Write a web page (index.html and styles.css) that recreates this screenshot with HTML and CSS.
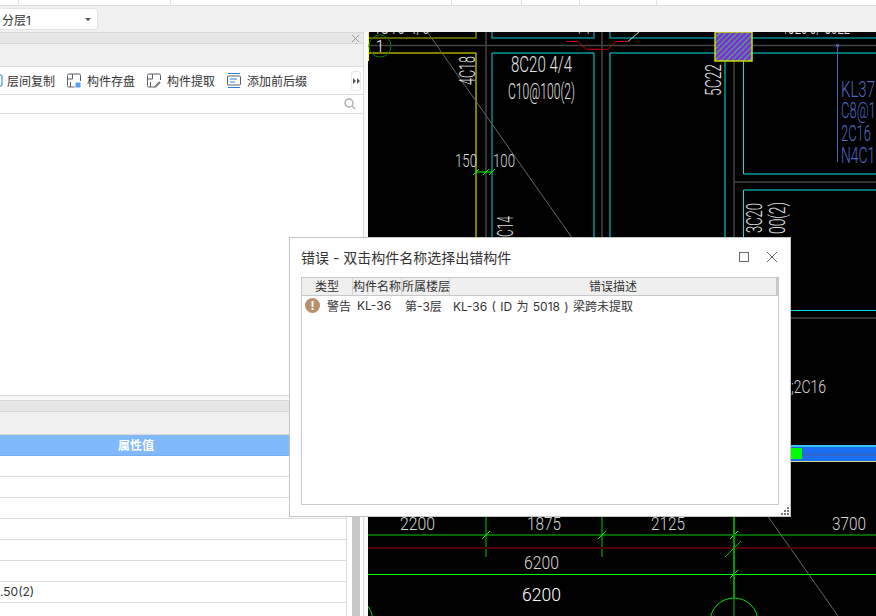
FILE: index.html
```html
<!DOCTYPE html>
<html lang="zh-CN">
<head>
    <meta charset="UTF-8">
    <title>错误 - 双击构件名称选择出错构件</title>
    <link rel="stylesheet" href="styles.css">
</head>
<body>

<div class="tabstrip">
    <span class="tab tab-a"></span><span class="tab tab-b"></span><span class="tab tab-c"></span><span class="tab tab-d"></span><span class="tab tab-e"></span><span class="tab tab-f"></span>
</div>
<div class="topbar">
    <div class="floor-select"><span>分层1</span><i class="caret"></i></div>
</div>

<div class="workspace">
    <div class="side">
        <div class="panel-head">
            <svg class="panel-close" width="9" height="9" viewBox="0 0 9 9"><path d="M1 1l7 7M8 1L1 8"/></svg>
        </div>
        <div class="band"></div>
        <div class="tools">
            <svg class="tool-icon tool-cut" width="3" height="14" viewBox="0 0 3 14"><path d="M-3 1h4a1 1 0 0 1 1 1v9a1 1 0 0 1-1 1h-4"/></svg>
            <span class="tool-label tool-first">层间复制</span>
            <svg class="tool-icon" width="14" height="15" viewBox="0 0 14 15"><path d="M8 14H2a1.500 1.500 0 0 1-1.500-1.500v-10A1.500 1.500 0 0 1 2 1h10a1.500 1.500 0 0 1 1.500 1.500V8M.5 6h5V1M3.500 14V9"/><rect class="fill-blue" x="8" y="9" width="6" height="6" rx="1"/></svg>
            <span class="tool-label">构件存盘</span>
            <svg class="tool-icon" width="14" height="15" viewBox="0 0 14 15"><path d="M8 14H2a1.500 1.500 0 0 1-1.500-1.500v-10A1.500 1.500 0 0 1 2 1h10a1.500 1.500 0 0 1 1.500 1.500V7M.5 6h5V1M3.500 14V9"/><path class="stroke-grey" d="M8 14l5-5"/></svg>
            <span class="tool-label">构件提取</span>
            <svg class="tool-icon" width="14" height="15" viewBox="0 0 14 15"><path class="stroke-blue" d="M1 .5h12M1 14.500h12"/><rect x=".5" y="3" width="13" height="9" rx="1"/><path class="stroke-blue" d="M3 6h7M3 9h5"/></svg>
            <span class="tool-label">添加前后缀</span>
            <div class="tools-more">
                <svg width="7" height="6" viewBox="0 0 7 6"><path d="M0 0l3 3-3 3zM4 0l3 3-3 3z"/></svg>
            </div>
        </div>
        <div class="search">
            <svg width="12" height="12" viewBox="0 0 12 12"><circle cx="5" cy="5" r="4"/><path d="M8 8l3 3"/></svg>
        </div>
        <div class="list"></div>

        <div class="props">
            <div class="panel-head"></div>
            <div class="band"></div>
            <div class="props-body">
                <div class="props-table">
                    <div class="props-title">属性值</div>
                    <div class="props-row"></div>
                    <div class="props-row"></div>
                    <div class="props-row"></div>
                    <div class="props-row"></div>
                    <div class="props-row"></div>
                    <div class="props-row"></div>
                    <div class="props-row">.50(2)</div>
                    <div class="props-row"></div>
                </div>
                <div class="scroll"><div class="scroll-thumb"></div></div>
            </div>
        </div>
    </div>

    <svg class="cad" width="508" height="584" viewBox="368 32 508 584">
        <defs>
            <pattern id="hatch" width="4" height="4" patternUnits="userSpaceOnUse" patternTransform="rotate(45)">
                <rect width="4" height="4" fill="#7a30e0"/>
                <rect width="1" height="4" fill="#48c040"/>
            </pattern>
        </defs>

        <!-- grid -->
        <path class="grey" d="M368 45.500H876M486 32V237M602 32V237M734 61V237M734 182H876M791 318H876"/>

        <!-- beams -->
        <path class="olive" d="M368 38H476V32"/>
        <path class="yellow" d="M368.500 32V61M368 53H476V237"/>
        <path class="teal" d="M492 32V38H594V32M610 32V38H876M492 53V237"/>
        <path class="cyan" d="M492 53H594V237M610 237V53H725M725 53V237M752 53H876M743.500 53V174H876M876 190H743.500V237M791 310.500H876"/>
        <path class="red" d="M566 41.500H578L586 49.300H608L616 41.500H628"/>
        <path class="pale" d="M628 41.500L639 32"/>
        <rect class="column" x="715" y="32" width="37" height="29" fill="url(#hatch)"/>

        <path class="diag" d="M428 33L838 616"/>
        <path class="slate" d="M837.500 45.500V162"/>
        <circle class="slate-dot" cx="837.500" cy="45.500" r="1.800"/>
        <circle class="axis-dark" cx="380" cy="46" r="11"/>

        <!-- dimension lines -->
        <path class="lime thin" d="M476 172H492M473 175l6-6M483 175l6-6M489 175l6-6"/>
        <path class="green" d="M368 535H876M486 516V557M602 516V557"/>
        <path class="darkred" d="M368 548H876"/>
        <path class="lime" d="M368 574.500H876M482 539l8-8M598 539l8-8M730 539l8-8M730 578l8-8"/>
        <path class="green-wide" d="M734 516V597"/>
        <path class="green thin" d="M725 557l16-16"/>
        <path class="green-dim" d="M734 597V616"/>
        <circle class="axis" cx="734" cy="622" r="24"/>
        <circle class="axis" cx="346" cy="622" r="27"/>

        <!-- blue member -->
        <rect x="791" y="445" width="85" height="2" fill="#35c4f2"/>
        <rect x="791" y="447" width="85" height="14" fill="#1c6ef0"/>
        <rect x="791" y="454" width="85" height="1.500" fill="#3c62b4"/>
        <rect x="791" y="461" width="85" height="1" fill="#cfe08a"/>
        <rect x="791" y="448" width="11" height="11" fill="#00ff00"/>

        <!-- labels -->
        <text class="label" x="372" y="34" textLength="58" lengthAdjust="spacingAndGlyphs">4C16 4/0</text>
        <text class="label" x="575" y="34" textLength="15" lengthAdjust="spacingAndGlyphs">4 4</text>
        <text class="label" x="781" y="34" textLength="69" lengthAdjust="spacingAndGlyphs">4C20 3/ C022</text>
        <text class="label big" x="376" y="52" textLength="8" lengthAdjust="spacingAndGlyphs">1</text>
        <text class="label" x="511" y="72" textLength="61" lengthAdjust="spacingAndGlyphs">8C20 4/4</text>
        <text class="label" x="508" y="99" textLength="67" lengthAdjust="spacingAndGlyphs">C10@100(2)</text>
        <text class="label" transform="translate(475 85) rotate(-90)" textLength="29" lengthAdjust="spacingAndGlyphs">4C18</text>
        <text class="label" transform="translate(721 96) rotate(-90)" textLength="32" lengthAdjust="spacingAndGlyphs">5C22</text>
        <text class="label small" x="455" y="167" textLength="22" lengthAdjust="spacingAndGlyphs">150</text>
        <text class="label small" x="493" y="167" textLength="22" lengthAdjust="spacingAndGlyphs">100</text>
        <text class="label" transform="translate(513 237) rotate(-90)" textLength="21" lengthAdjust="spacingAndGlyphs">C14</text>
        <text class="label" transform="translate(762 233) rotate(-90)" textLength="30" lengthAdjust="spacingAndGlyphs">3C20</text>
        <text class="label" transform="translate(785 234) rotate(-90)" textLength="32" lengthAdjust="spacingAndGlyphs">00(2)</text>
        <text class="label label-blue" x="841" y="97" textLength="34" lengthAdjust="spacingAndGlyphs">KL37</text>
        <text class="label label-blue" x="841" y="118" textLength="42" lengthAdjust="spacingAndGlyphs">C8@10</text>
        <text class="label label-blue" x="841" y="141" textLength="30" lengthAdjust="spacingAndGlyphs">2C16</text>
        <text class="label label-blue" x="841" y="163" textLength="42" lengthAdjust="spacingAndGlyphs">N4C12</text>
        <text class="label small" x="791" y="393" textLength="35" lengthAdjust="spacingAndGlyphs">;2C16</text>
        <text class="label small" x="400" y="530" textLength="35" lengthAdjust="spacingAndGlyphs">2200</text>
        <text class="label small" x="527" y="530" textLength="34" lengthAdjust="spacingAndGlyphs">1875</text>
        <text class="label small" x="651" y="530" textLength="34" lengthAdjust="spacingAndGlyphs">2125</text>
        <text class="label small" x="832" y="530" textLength="34" lengthAdjust="spacingAndGlyphs">3700</text>
        <text class="label small" x="524" y="569" textLength="35" lengthAdjust="spacingAndGlyphs">6200</text>
        <text class="label large" x="522" y="601" textLength="39" lengthAdjust="spacingAndGlyphs">6200</text>
    </svg>
</div>

<div class="dialog">
    <div class="dialog-head">
        <span class="dialog-title">错误 - 双击构件名称选择出错构件</span>
        <svg class="win-btn" width="10" height="10" viewBox="0 0 10 10"><rect x=".5" y=".5" width="9" height="9"/></svg>
        <svg class="win-btn" width="10" height="10" viewBox="0 0 10 10"><path d="M0 0l10 10M10 0L0 10"/></svg>
    </div>
    <div class="errors">
        <div class="errors-head">
            <span class="col col-type">类型</span>
            <span class="col col-name">构件名称</span>
            <span class="col col-floor">所属楼层</span>
            <span class="col col-desc">错误描述</span>
        </div>
        <div class="errors-row">
            <span class="warn-icon">!</span>
            <span class="cell cell-type">警告</span>
            <span class="cell cell-name">KL-36</span>
            <span class="cell cell-floor">第-3层</span>
            <span class="cell cell-desc">KL-36 ( ID 为 5018 ) 梁跨未提取</span>
        </div>
    </div>
    <svg class="grip" width="8" height="8" viewBox="0 0 8 8"><path d="M6 0h2v2H6zM3 3h2v2H3zM6 3h2v2H6zM0 6h2v2H0zM3 6h2v2H3zM6 6h2v2H6z"/></svg>
</div>

</body>
</html>
```

FILE: styles.css
```css
html, body {
    margin: 0;
    padding: 0;
    height: 616px;
    overflow: hidden;
}
body {
    position: relative;
    font-family: "Inter", "Noto Sans CJK SC", sans-serif;
    font-size: 12px;
    color: #333;
    background-color: #fff;
}

/* top */
.tabstrip {
    display: flex;
    height: 5px;
    border-bottom: 1px solid #dcdcdc;
}
.tab {
    border-right: 1px solid #e2e2e2;
    box-sizing: border-box;
}
.tab-a { width: 19px; }
.tab-b { width: 152px; }
.tab-c { width: 281px; }
.tab-d { width: 70px; }
.tab-e { width: 58px; }
.tab-f { width: 77px; }
.topbar {
    display: flex;
    align-items: center;
    height: 26px;
    background-color: #f0f0f0;
}
.floor-select {
    display: flex;
    align-items: center;
    justify-content: space-between;
    box-sizing: border-box;
    width: 98px;
    height: 22px;
    padding: 0 6px 0 2px;
    background-color: #fff;
    border: 1px solid #e4e4e4;
    border-left: 0;
    border-radius: 0 4px 4px 0;
}
.caret {
    border-top: 3px solid #555;
    border-left: 3px solid transparent;
    border-right: 3px solid transparent;
}

.workspace {
    display: flex;
    height: 584px;
}

/* left side */
.side {
    display: flex;
    flex-direction: column;
    box-sizing: border-box;
    width: 368px;
    height: 584px;
    padding-right: 4px;
    background-color: #f8f8f8;
}
.side > * {
    flex: none;
    border-right: 1px solid #dcdcdc;
}
.panel-head {
    display: flex;
    flex: none;
    align-items: center;
    justify-content: flex-end;
    height: 10px;
    padding-right: 3px;
    background-color: #e6e6e6;
    border-top: 1px solid #d8d8d8;
    border-bottom: 1px solid #d8d8d8;
}
.panel-close path {
    fill: none;
    stroke: #999;
}
.band {
    flex: none;
    height: 22px;
    background-color: #f0f0f0;
    border-bottom: 1px solid #dcdcdc;
}
.tools {
    display: flex;
    align-items: center;
    height: 27px;
    background-color: #fff;
    border-bottom: 1px solid #dcdcdc;
}
.tool-icon {
    flex: none;
    overflow: hidden;
}
.tool-icon path, .tool-icon rect {
    fill: none;
    stroke: #5a5f67;
}
.tool-icon .stroke-blue { stroke: #2b7de0; }
.tool-icon .stroke-grey { stroke: #777; stroke-width: 2; }
.tool-icon .fill-blue { fill: #5aa0ea; stroke: #fff; }
.tool-cut path { stroke: #2b7de0; }
.tool-label {
    margin: 0 12px 0 6px;
    white-space: nowrap;
}
.tool-first {
    margin-left: 4px;
}
.tools-more {
    display: flex;
    align-items: center;
    justify-content: center;
    box-sizing: border-box;
    width: 10px;
    height: 20px;
    margin-left: 32px;
    border: 1px solid #e8e8e8;
    border-radius: 3px;
}
.tools-more path {
    fill: #555;
}
.search {
    display: flex;
    align-items: center;
    justify-content: flex-end;
    height: 18px;
    padding-right: 7px;
    background-color: #fff;
    border-bottom: 1px solid #dcdcdc;
}
.search circle, .search path {
    fill: none;
    stroke: #aaa;
    stroke-width: 1.300;
}
.list {
    height: 281px;
    background-color: #fff;
    border-bottom: 1px solid #dcdcdc;
}
.props {
    display: flex;
    flex-direction: column;
    height: 216px;
    margin-top: 4px;
    overflow: hidden;
    background-color: #fff;
}
.props-body {
    display: flex;
    flex: none;
    height: 181px;
}
.props-table {
    box-sizing: border-box;
    width: 347px;
    border-right: 1px solid #dcdcdc;
}
.props-title {
    box-sizing: border-box;
    height: 21px;
    line-height: 22px;
    padding-right: 74px;
    text-align: center;
    font-weight: bold;
    color: #fff;
    background-color: #7fb9f9;
    border-bottom: 1px solid #74aeee;
}
.props-row {
    box-sizing: border-box;
    height: 21px;
    line-height: 20px;
    border-bottom: 1px solid #dcdcdc;
}
.scroll {
    flex: 1;
    padding: 0 3px 0 5px;
}
.scroll-thumb {
    height: 100%;
    background-color: #c8c8c8;
}

/* drawing */
.cad {
    display: block;
    flex: none;
    background-color: #000;
}
.cad path, .cad circle {
    fill: none;
}
.grey { stroke: #444; stroke-width: 1.500; }
.olive { stroke: #808000; stroke-width: 1.500; }
.yellow { stroke: #ffff00; }
.teal { stroke: #008a8a; stroke-width: 1.500; }
.cyan { stroke: #00e5e5; }
.red { stroke: #c80000; }
.pale { stroke: #b8d8d8; }
.diag { stroke: #666; }
.slate { stroke: #5060a8; }
.cad .slate-dot { fill: #5060a8; }
.column { stroke: #c8e000; stroke-width: 1.500; }
.axis-dark { stroke: #0a7a0a; }
.axis { stroke: #00e000; }
.lime { stroke: #00ff00; }
.thin { stroke-width: 1; }
.green { stroke: #00c800; }
.green-wide { stroke: #009a00; stroke-width: 2; }
.green-dim { stroke: #0a5a0a; stroke-width: 2; }
.darkred { stroke: #500000; stroke-width: 2; }
.label {
    font-family: "Roboto", "Liberation Sans", sans-serif;
    font-size: 22px;
    font-weight: 300;
    fill: #e4e4e4;
}
.label-blue { fill: #5068c0; }
.small { font-size: 18px; fill: #d8d8d8; }
.large { font-size: 19px; fill: #fff; }
.big { font-size: 17px; fill: #fff; }

/* dialog */
.dialog {
    position: absolute;
    left: 289px;
    top: 237px;
    box-sizing: border-box;
    width: 502px;
    height: 280px;
    background-color: #fff;
    border: 1px solid #c4c4c4;
}
.dialog-head {
    display: flex;
    align-items: center;
    height: 38px;
    margin-bottom: 1px;
    padding: 0 13px 0 11px;
}
.dialog-title {
    flex: 1;
    font-size: 14px;
}
.win-btn {
    margin-left: 18px;
}
.win-btn rect, .win-btn path {
    fill: none;
    stroke: #666;
}
.errors {
    box-sizing: border-box;
    width: 478px;
    height: 228px;
    margin-left: 11px;
    border: 1px solid #c8c8c8;
}
.errors-head {
    display: flex;
    height: 17px;
    line-height: 17px;
    background-color: #efefef;
    border-bottom: 1px solid #c8c8c8;
    border-right: 2px solid #c8c8c8;
}
.col {
    box-sizing: border-box;
    text-align: center;
    white-space: nowrap;
    border-right: 1px solid #d4d4d4;
}
.col-type { width: 51px; }
.col-name { width: 49px; }
.col-floor { width: 48px; }
.col-desc { flex: 1; border-right: 0; }
.errors-row {
    display: flex;
    align-items: center;
    height: 18px;
    padding-left: 3px;
    white-space: nowrap;
}
.warn-icon {
    flex: none;
    width: 15px;
    height: 15px;
    line-height: 15px;
    text-align: center;
    color: #fff;
    font-weight: bold;
    border-radius: 50%;
    background-color: #b8906e;
}
.cell-type { margin-left: 7px; width: 30px; }
.cell-name { width: 48px; }
.cell-floor { width: 48px; }
.cell-desc { word-spacing: 1px; }
.grip {
    position: absolute;
    right: 1px;
    bottom: 1px;
}
.grip path {
    fill: #777;
}
```
